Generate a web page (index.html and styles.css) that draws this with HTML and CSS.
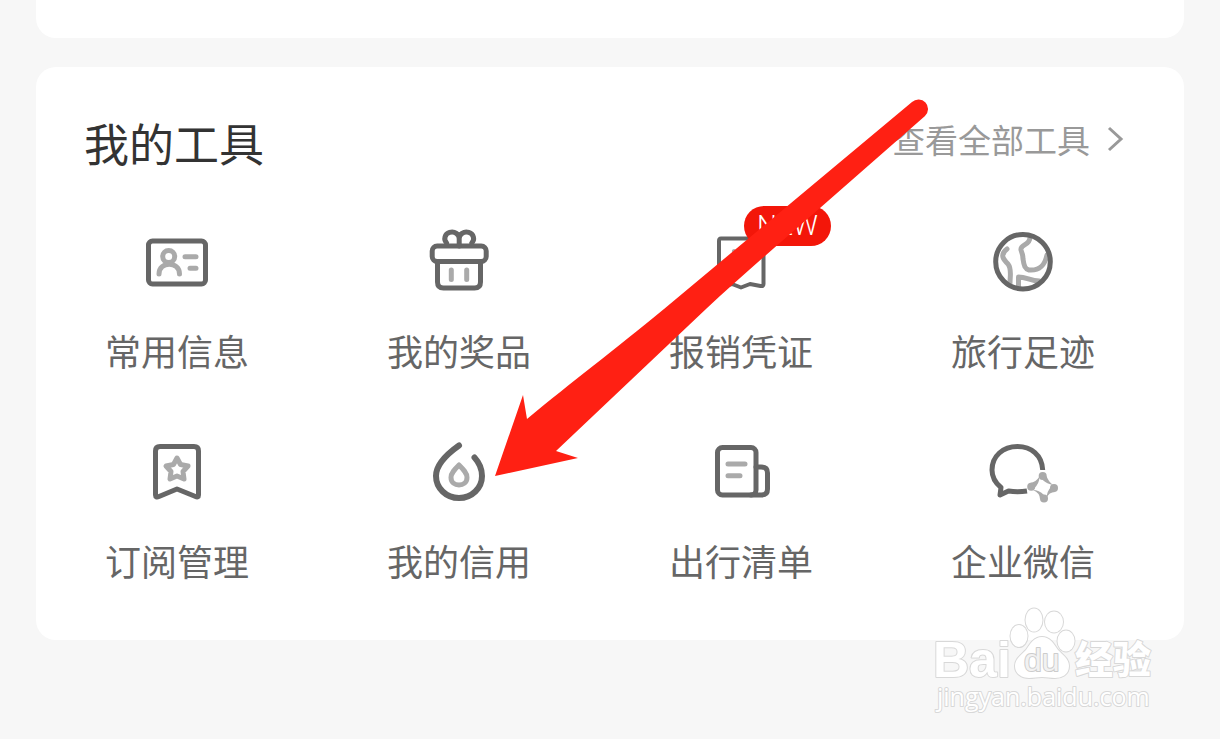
FILE: index.html
```html
<!DOCTYPE html>
<html lang="zh-CN">
  <head>
    <meta charset="UTF-8" />
    <meta name="viewport" content="width=device-width, initial-scale=1.0" />
    <title>我的工具</title>
    <link rel="stylesheet" href="styles.css">
  </head>
  <body>
    <main class="page">
      <section class="card card-prev"></section>

      <section class="card">
        <header class="card-header">
          <h1 class="title">我的工具</h1>
          <a class="more" href="#">
            查看全部工具
            <svg class="chevron" viewBox="0 0 18 28"><path d="M3 3l12 11L3 25" /></svg>
          </a>
        </header>

        <nav class="tools">
          <a class="tool" href="#">
            <svg class="icon" viewBox="0 0 72 72">
              <rect x="7.500" y="15" width="57" height="43" rx="4" />
              <g class="light">
                <circle cx="27.700" cy="30.500" r="6" />
                <path d="M18 48c0-13 20.500-13 20.500 0M44 30.700h11M49 42.300h6" />
              </g>
            </svg>
            <span class="label">常用信息</span>
          </a>
          <a class="tool" href="#">
            <svg class="icon" viewBox="0 0 72 72">
              <rect x="9.200" y="20" width="54" height="15.500" rx="5" />
              <path d="M14.500 36v20q0 6 6 6h31q6 0 6-6V36" />
              <path d="M36.200 20v-7a7.200 6.500 0 1 0-12.500 4M36.200 13a7.200 6.500 0 1 1 12.500 4" />
              <path class="light" d="M28.300 44v9.500M43.700 44v9.500" />
            </svg>
            <span class="label">我的奖品</span>
          </a>
          <a class="tool" href="#">
            <svg class="icon receipt" viewBox="0 0 72 72">
              <path d="M16 12.500h40q2.500 0 2.500 2.500v43q0 2.500-3 2L45 58l-9 3.500-9-3.500-10 2.500q-3 0-3-2V15q0-2.500 2-2.500z" />
              <path class="light" d="M29 25l7 8 7-8M36 33v10M31 37h10" />
            </svg>
            <span class="badge">NEW</span>
            <span class="label">报销凭证</span>
          </a>
          <a class="tool" href="#">
            <svg class="icon" viewBox="0 0 72 72">
              <path class="light" d="M43 11c0 9-10 7-9 13 1 4 2 4 2 9 1 7 2 10 6 11 12 1 16-6 18-15M20 23c-8 6-3 11 1 15 4 5 2 12 2 19M31.500 61v-10c8 0 12 4 21 4" />
              <circle cx="36" cy="35.700" r="27.300" />
            </svg>
            <span class="label">旅行足迹</span>
          </a>
          <a class="tool" href="#">
            <svg class="icon" viewBox="0 0 72 72">
              <path d="M19 10.500h34q4.500 0 4.500 4.500v44q0 3-3 1.500L36 53l-18 7.500q-3.500 1.500-3.500-1.500V15q0-4.500 4.500-4.500z" />
              <path class="light" d="M36 22l3.500 6.500 7.500 1.500-5 5.500 1 7.500-7-3-7 3 1-7.500-5-5.500 7.500-1.500z" />
            </svg>
            <span class="label">订阅管理</span>
          </a>
          <a class="tool" href="#">
            <svg class="icon drop" viewBox="0 0 72 72">
              <path d="M36 9.500C24 18 13 29 13 40c0 12 10 22 23 22s23-10 23-22c0-7-2.500-13-7.500-18.500" />
              <path class="light" d="M36 29c-4 4-8 8-8 12.500 0 10 16 10 16 0C44 37 40 33 36 29z" />
            </svg>
            <span class="label">我的信用</span>
          </a>
          <a class="tool" href="#">
            <svg class="icon" viewBox="0 0 72 72">
              <rect x="12.500" y="11.500" width="38.500" height="47.500" rx="5" />
              <path d="M51 31h5q6.500 0 6.500 6v16q0 6-6 6H46" />
              <path class="light" d="M23 28h17M23 39.700h12" />
            </svg>
            <span class="label">出行清单</span>
          </a>
          <a class="tool" href="#">
            <svg class="icon wechat" viewBox="0 0 72 72">
              <path d="M55.700 34C55 19 44 10.500 30.500 10.500 16 10.500 5 20 5 34c0 7 3.500 13 9 17.500L13 59l8.500-4c6 1 12 1 18.500 0" />
              <g class="nodes">
                <path d="M59.500 40Q61 45 66 49q-6-1-10.300-5z" />
                <path d="M68 56q-6 0-8.500 6 .5-7 4.500-11z" />
                <path d="M53 63q0-6-7-9 6 0 11 5z" />
                <path d="M43 47q6-1 9.500-6.500 0 7-5.500 12z" />
                <circle cx="55.700" cy="40" r="4" />
                <circle cx="44.200" cy="50.700" r="4" />
                <circle cx="67" cy="52" r="4" />
                <circle cx="57" cy="62.500" r="4" />
              </g>
            </svg>
            <span class="label">企业微信</span>
          </a>
        </nav>
      </section>

      <!-- 指向「我的信用」的箭头 -->
      <svg class="arrow" viewBox="0 0 440 385">
        <path d="M2 381L30 300l4 24C80 286 120 256 171 214L419 7a9.500 9.500 0 0 1 13 14L327 113C290 145 250 180 213 214L63 356l22 7z" />
      </svg>

      <svg class="watermark" viewBox="0 0 230 120">
        <text class="wm-logo" x="3" y="77">Bai</text>
        <g class="paw">
          <ellipse cx="89" cy="36" rx="8.500" ry="11" />
          <ellipse cx="104" cy="20" rx="8.500" ry="11.500" />
          <ellipse cx="124" cy="22" rx="9" ry="10.500" />
          <ellipse cx="136" cy="41" rx="8.500" ry="10.500" />
          <path d="M112 37c8 0 12 7 16 13 5 5 11 9 11 16 0 9-8 12-14 12-5 0-8-1-13-1s-8 1-13 1c-7 0-14-4-14-12 0-7 6-11 11-16 4-6 8-13 16-13z" />
        </g>
        <text class="wm-du" x="94" y="71">du</text>
        <text class="wm-cn" x="145" y="73">经验</text>
        <text class="wm-url" x="7" y="106">jingyan.baidu.com</text>
      </svg>
    </main>
  </body>
</html>
```

FILE: styles.css
```css
body {
  margin: 0;
  background-color: #f7f7f7;
  font-family: "Noto Sans CJK SC", sans-serif;
}
a {
  color: inherit;
  text-decoration: none;
}
.page {
  position: relative;
  box-sizing: border-box;
  min-height: 100vh;
  padding: 0 36px;
}
.card {
  background-color: #fff;
  border-radius: 20px;
  padding-bottom: 42px;
}
.card-prev {
  height: 38px;
  padding: 0;
  margin-bottom: 29px;
  border-radius: 0 0 20px 20px;
}
.card-header {
  display: flex;
  justify-content: space-between;
  align-items: center;
  padding: 43px 60px 0 48px;
}
.title {
  margin: 0;
  font-size: 45px;
  font-weight: 400;
  line-height: 66px;
  color: #333;
}
.more {
  display: flex;
  align-items: center;
  gap: 16px;
  font-size: 33px;
  line-height: 58px;
  padding-bottom: 8px;
  color: #999;
}
.chevron {
  width: 18px;
  height: 28px;
  fill: none;
  stroke: #999;
  stroke-width: 3;
}
.tools {
  display: grid;
  grid-template-columns: repeat(4, 1fr);
  row-gap: 48px;
  padding: 50px 20px 0 0;
}
.tool {
  position: relative;
  display: flex;
  flex-direction: column;
  align-items: center;
  gap: 14px;
  color: #666;
}
.icon {
  width: 72px;
  height: 72px;
  overflow: visible;
  fill: none;
  stroke: #666;
  stroke-width: 5;
  stroke-linecap: round;
  stroke-linejoin: round;
}
.light {
  stroke: #aaa;
}
.receipt {
  stroke-width: 4;
}
.drop {
  stroke-width: 6;
}
.drop .light {
  stroke-width: 5;
}
.wechat {
  stroke-linecap: butt;
}
.nodes {
  fill: #aaa;
  stroke: none;
}
.label {
  font-size: 36px;
  line-height: 76px;
}
.badge {
  position: absolute;
  top: -20px;
  left: calc(50% + 3px);
  width: 87px;
  border-radius: 20px;
  background-color: #f31609;
  color: #fff;
  font-family: Roboto, sans-serif;
  font-size: 28px;
  font-weight: 300;
  line-height: 40px;
  text-align: center;
}
.arrow {
  position: absolute;
  top: 95px;
  left: 493px;
  width: 440px;
  height: 385px;
  fill: #ff2013;
}
.watermark {
  position: absolute;
  top: 600px;
  right: 60px;
  width: 230px;
  height: 120px;
  fill: #fff;
  stroke: #d8d8d8;
  stroke-width: 2;
  stroke-linejoin: round;
  paint-order: stroke;
}
.wm-logo {
  font: bold 50px "Liberation Sans", sans-serif;
}
.wm-du {
  font: 32px "Liberation Sans", sans-serif;
  fill: #f2f2f2;
  stroke: #ccc;
}
.wm-cn {
  font: 900 38px "Noto Sans CJK SC", sans-serif;
}
.wm-url {
  font: 500 25px "Open Sans", sans-serif;
}
```
